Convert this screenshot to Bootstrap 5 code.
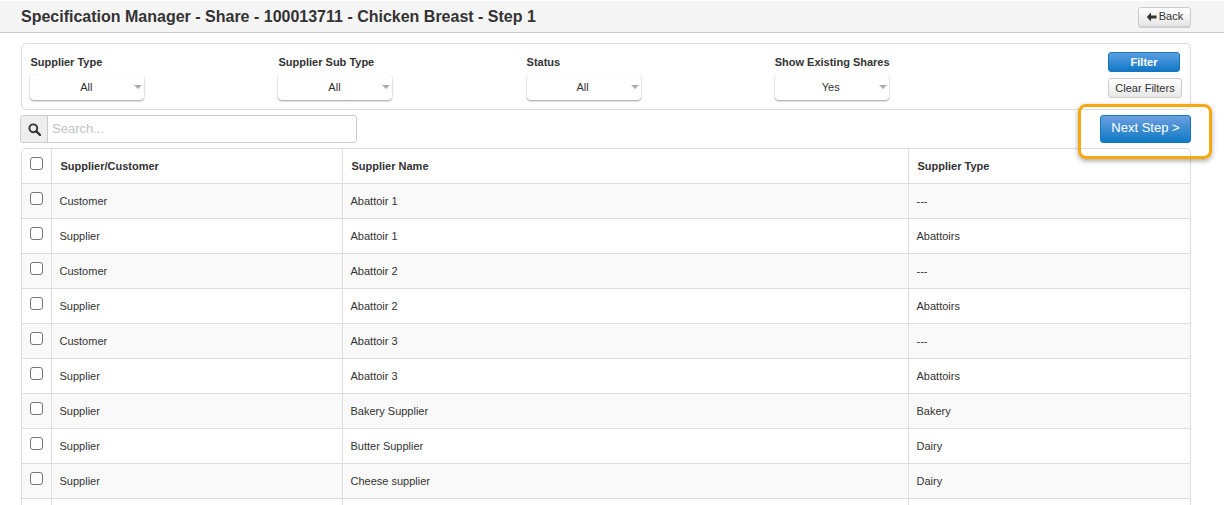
<!DOCTYPE html>
<html lang="en">
<head>
<meta charset="utf-8">
<title>Specification Manager</title>
<link href="https://cdn.jsdelivr.net/npm/bootstrap@5.3.0/dist/css/bootstrap.min.css" rel="stylesheet">
<style>
html,body{height:505px;overflow:hidden}
body{font-family:"Liberation Sans",Arial,sans-serif;font-size:11px;color:#333;background:#fff}
.page-head{height:32px;background:#f5f5f5;border-bottom:1px solid #ccc;padding:0 33px 0 21px;margin-top:1px}
.page-title{font-size:16px;font-weight:700;color:#333;margin:0;line-height:30px}
.back-btn{height:20px;width:53px;font-size:11px;padding:0;color:#333;background:linear-gradient(#fff,#e6e6e6);border:1px solid #ccc;border-radius:3px;box-shadow:0 1px 1px rgba(0,0,0,.15);display:flex;align-items:center;justify-content:center;gap:2px}
.wrap-area{padding:0 33px 0 21px;margin-top:10px;position:relative}
.filter-panel{height:67px;border:1px solid #ddd;border-radius:5px;padding:8px 8px 8px 8.4px}
.filter-col{width:248.1px}
.filter-label{font-weight:700;font-size:11px;line-height:13px;margin-top:4px;height:18px;color:#333}
.drop-box{width:114px;height:26px;border-radius:4px;background:#fff;box-shadow:0 1px 2px rgba(0,0,0,.4);position:relative;line-height:26px;font-size:11px}
.drop-text{display:block;width:112px;text-align:center}
.drop-caret{position:absolute;right:2px;top:11px;width:0;height:0;border-left:4px solid transparent;border-right:4px solid transparent;border-top:4px solid #aaa}
.action-col{width:74px;gap:6px}
.filter-btn{width:72px;height:20px;font-size:11px;font-weight:700;padding:0;color:#fff;border:1px solid #1b75bb;border-radius:3px;background:linear-gradient(#5a9fe0,#1178c9);line-height:18px}
.clear-btn{width:74px;height:20px;font-size:11px;padding:0;color:#333;border:1px solid #ccc;border-radius:3px;background:linear-gradient(#fff,#e8e8e8);line-height:18px}
.search-row{height:28px;margin-top:5px;margin-left:-1px}
.search-group{width:337px;height:28px;border:1px solid #ccc;border-radius:3px;background:#fff}
.search-icon{width:27px;background:#eee;border-right:1px solid #ccc;display:flex;align-items:center;justify-content:center}
.search-text{border:0;outline:0;flex:1;padding:0 4px 1px;font-size:13px;font-family:inherit;min-width:0;background:transparent}
.search-text::placeholder{color:#c4c4c4}
.next-btn{width:91px;height:28px;font-size:13px;padding:0 0 2px;color:#fff;border:1px solid #1377c0;border-radius:3px;background:linear-gradient(#6c9fe0,#0f7ac4);line-height:24px}
.callout{position:absolute;left:1078px;top:61px;width:134px;height:55px;border:3px solid #f5a90f;border-radius:8px;box-shadow:0 2px 5px rgba(0,0,0,.35);pointer-events:none}
.data-box{margin-top:5px;border:1px solid #ddd;border-bottom:0;border-radius:5px 5px 0 0;overflow:hidden;height:400px}
.data-table{width:100%;table-layout:fixed;border-collapse:collapse;margin:0;font-size:11px;color:#333}
.data-table th,.data-table td{height:35px;padding:0 8px;border:1px solid #ddd;border-top:0;vertical-align:middle;background:transparent;color:#333}
.data-table td{padding-top:1px}
.data-table th{font-weight:700;padding-left:9px;height:34px}
.data-table tr>*:first-child{border-left:0;padding:0;text-align:center}
.data-table tr>*:last-child{border-right:0}
.data-table tbody tr:nth-child(odd) td{background:#f9f9f9}
.tick{width:13px;height:13px;border:1px solid #767676;border-radius:3px;background:#fff;margin:0 0 5px;display:inline-block;appearance:none;vertical-align:middle}
</style>
</head>
<body>
<header class="page-head d-flex justify-content-between align-items-center">
  <h1 class="page-title">Specification Manager - Share - 100013711 - Chicken Breast - Step 1</h1>
  <button class="back-btn" type="button"><svg width="11" height="10" viewBox="0 0 11 10"><path d="M5 .5 .8 5 5 9.500V6.600H10.500V3.400H5z" fill="#333"/></svg>Back</button>
</header>
<main class="wrap-area">
  <section class="filter-panel d-flex">
    <div class="filter-col"><div class="filter-label">Supplier Type</div><div class="drop-box"><span class="drop-text">All</span><i class="drop-caret"></i></div></div>
    <div class="filter-col"><div class="filter-label">Supplier Sub Type</div><div class="drop-box"><span class="drop-text">All</span><i class="drop-caret"></i></div></div>
    <div class="filter-col"><div class="filter-label">Status</div><div class="drop-box"><span class="drop-text">All</span><i class="drop-caret"></i></div></div>
    <div class="filter-col"><div class="filter-label">Show Existing Shares</div><div class="drop-box"><span class="drop-text">Yes</span><i class="drop-caret"></i></div></div>
    <div class="action-col ms-auto d-flex flex-column align-items-start"><button class="filter-btn" type="button">Filter</button><button class="clear-btn" type="button">Clear Filters</button></div>
  </section>
  <div class="search-row d-flex justify-content-between">
    <div class="search-group d-flex overflow-hidden">
      <span class="search-icon"><svg width="13" height="13" viewBox="0 0 13 13"><circle cx="5.300" cy="5.300" r="3.900" fill="none" stroke="#333" stroke-width="1.900"/><path d="M8.200 8.200 12 12" stroke="#333" stroke-width="2.400" stroke-linecap="round"/></svg></span>
      <input class="search-text" type="text" placeholder="Search...">
    </div>
    <button class="next-btn" type="button">Next Step &gt;</button>
  </div>
  <div class="data-box">
    <table class="data-table">
      <colgroup><col style="width:29px"><col style="width:291px"><col style="width:566px"><col></colgroup>
      <thead><tr><th><input class="tick" type="checkbox" aria-label="Select all"></th><th>Supplier/Customer</th><th>Supplier Name</th><th>Supplier Type</th></tr></thead>
      <tbody>
        <tr><td><input class="tick" type="checkbox" aria-label="Select"></td><td>Customer</td><td>Abattoir 1</td><td>---</td></tr>
        <tr><td><input class="tick" type="checkbox" aria-label="Select"></td><td>Supplier</td><td>Abattoir 1</td><td>Abattoirs</td></tr>
        <tr><td><input class="tick" type="checkbox" aria-label="Select"></td><td>Customer</td><td>Abattoir 2</td><td>---</td></tr>
        <tr><td><input class="tick" type="checkbox" aria-label="Select"></td><td>Supplier</td><td>Abattoir 2</td><td>Abattoirs</td></tr>
        <tr><td><input class="tick" type="checkbox" aria-label="Select"></td><td>Customer</td><td>Abattoir 3</td><td>---</td></tr>
        <tr><td><input class="tick" type="checkbox" aria-label="Select"></td><td>Supplier</td><td>Abattoir 3</td><td>Abattoirs</td></tr>
        <tr><td><input class="tick" type="checkbox" aria-label="Select"></td><td>Supplier</td><td>Bakery Supplier</td><td>Bakery</td></tr>
        <tr><td><input class="tick" type="checkbox" aria-label="Select"></td><td>Supplier</td><td>Butter Supplier</td><td>Dairy</td></tr>
        <tr><td><input class="tick" type="checkbox" aria-label="Select"></td><td>Supplier</td><td>Cheese supplier</td><td>Dairy</td></tr>
        <tr><td></td><td></td><td></td><td></td></tr>
      </tbody>
    </table>
  </div>
  <div class="callout"></div>
</main>
<script src="https://cdn.jsdelivr.net/npm/bootstrap@5.3.0/dist/js/bootstrap.bundle.min.js"></script>
</body>
</html>
